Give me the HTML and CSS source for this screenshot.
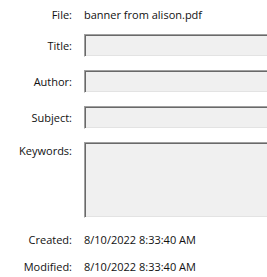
FILE: index.html
```html
<!DOCTYPE html>
<html lang="en">
<head>
  <meta charset="UTF-8" />
  <title>Document Properties</title>
  <link rel="stylesheet" href="styles.css">
</head>
<body>
  <div class="props">
    <div class="row info first">
      <span class="label">File:</span>
      <span class="value">banner from alison.pdf</span>
    </div>
    <div class="row">
      <span class="label">Title:</span>
      <div class="box"></div>
    </div>
    <div class="row">
      <span class="label">Author:</span>
      <div class="box"></div>
    </div>
    <div class="row">
      <span class="label">Subject:</span>
      <div class="box"></div>
    </div>
    <div class="row top">
      <span class="label">Keywords:</span>
      <div class="box tall"></div>
    </div>
    <div class="row info created">
      <span class="label">Created:</span>
      <span class="value">8/10/2022 8:33:40 AM</span>
    </div>
    <div class="row info">
      <span class="label">Modified:</span>
      <span class="value">8/10/2022 8:33:40 AM</span>
    </div>
  </div>
</body>
</html>
```

FILE: styles.css
```css
body {
  margin: 0;
  background: #fff;
  color: #111;
  font-family: "Open Sans", "Noto Sans", sans-serif;
  font-size: 11px;
  overflow: hidden;
}
.props {
  width: 267px;
  padding-top: 6px;
}
.row {
  display: grid;
  grid-template-columns: 72px 1fr;
  column-gap: 12px;
  align-items: center;
  margin-bottom: 13px;
  line-height: 18px;
}
.row.top {
  align-items: start;
}
.row.first {
  margin-bottom: 10px;
}
.row.created {
  margin-top: 12px;
  margin-bottom: 9px;
}
.label {
  text-align: right;
}
/* sunken edit field, cut off by the window edge on the right */
.box {
  height: 23px;
  box-sizing: border-box;
  background: #f0f0f0;
  border: 1px solid;
  border-color: #a0a0a0 #fff #fff #a0a0a0;
  border-right: 0;
  box-shadow: inset 1px 1px 0 #696969, inset 0 -1px 0 #e3e3e3;
}
.box.tall {
  height: 76px;
}
```
